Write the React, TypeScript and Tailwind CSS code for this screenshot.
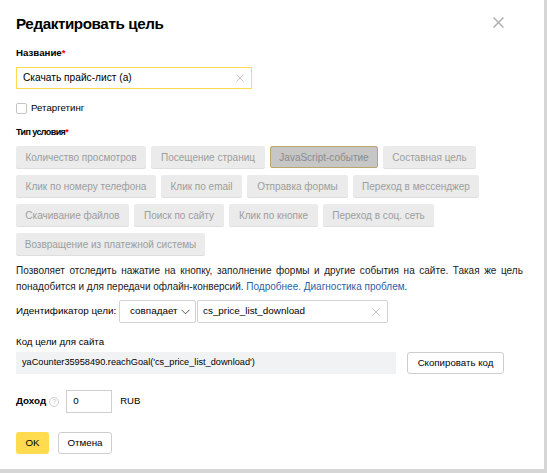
import React from "react";

const ys = { fontFamily: '"Liberation Sans", Arial, sans-serif' };

type Kind = { t: string; w: string };

const rows: Kind[][] = [
  [
    { t: "Количество просмотров", w: "w-[130px]" },
    { t: "Посещение страниц", w: "w-[114px]" },
    { t: "JavaScript-событие", w: "w-[108px]" },
    { t: "Составная цель", w: "w-[93px]" },
  ],
  [
    { t: "Клик по номеру телефона", w: "w-[140px]" },
    { t: "Клик по email", w: "w-[81px]" },
    { t: "Отправка формы", w: "w-[101px]" },
    { t: "Переход в мессенджер", w: "w-[126px]" },
  ],
  [
    { t: "Скачивание файлов", w: "w-[113px]" },
    { t: "Поиск по сайту", w: "w-[90px]" },
    { t: "Клик по кнопке", w: "w-[89px]" },
    { t: "Переход в соц. сеть", w: "w-[111px]" },
  ],
  [{ t: "Возвращение из платежной системы", w: "w-[189px]" }],
];

function Cross({ size = 10, color = "#b3b3b3", w = 1.2 }: { size?: number; color?: string; w?: number }) {
  return (
    <svg width={size} height={size} viewBox="0 0 10 10">
      <path d="M0.5 0.5 L9.5 9.5 M9.5 0.5 L0.5 9.5" stroke={color} strokeWidth={w} fill="none" />
    </svg>
  );
}

export default function App() {
  return (
    <div className="w-[547px] h-[473px] bg-[#d6d6d6] overflow-hidden" style={ys}>
      <div className="w-[544px] h-[469px] bg-white relative px-4 pt-[12px] text-black">
        <button className="absolute left-[493px] top-[17px]">
          <Cross size={11} color="#b0b0b0" w={1.4} />
        </button>

        <h1 className="h-[24px] flex items-center text-[15.2px] font-bold tracking-[-0.4px]">Редактировать цель</h1>

        <div className="mt-[10px] h-[14px] flex items-center text-[9.7px] font-bold">
          Название<span className="text-[#ff0000]">*</span>
        </div>

        <div className="mt-[7px] w-[236px] h-[22px] border border-[#ffdb4d] flex items-center justify-between pl-[6px] pr-[7px]">
          <span className="text-[10.2px]">Скачать прайс-лист (а)</span>
          <Cross size={8} color="#b8b8b8" w={1} />
        </div>

        <label className="mt-[13px] flex items-center gap-[4px] h-[12px]">
          <span className="w-[11px] h-[11px] border border-[#c4c4c4] rounded-[2px] bg-white" />
          <span className="text-[9.7px]">Ретаргетинг</span>
        </label>

        <div className="mt-[13px] h-[12px] flex items-center text-[9px] font-bold tracking-[-0.6px]">
          Тип условия<span className="text-[#ff0000]">*</span>
        </div>

        <div className="mt-[7px] flex flex-col gap-[7px]">
          {rows.map((r, i) => (
            <div key={i} className="flex gap-[5px]">
              {r.map((b) => {
                const sel = b.t === "JavaScript-событие";
                return (
                  <div
                    key={b.t}
                    className={
                      b.w +
                      (sel
                        ? " h-[22px] flex items-center justify-center rounded-[2px] bg-[#c6c6c6] border border-[#bba66c] text-[10px] text-[#8c8c8c] whitespace-nowrap"
                        : " h-[22px] flex items-center justify-center rounded-[2px] bg-[#ebebeb] shadow-[0_1px_0_#dedede] text-[10px] text-[#9d9d9d] whitespace-nowrap")
                    }
                  >
                    {b.t}
                  </div>
                );
              })}
            </div>
          ))}
        </div>

        <p className="mt-[8px] text-[10px] leading-[16px] text-[#1a1a1a] whitespace-nowrap">
          <span className="[word-spacing:1.8px]">
            Позволяет отследить нажатие на кнопку, заполнение формы и другие события на сайте. Такая же цель
          </span>
          <br />
          понадобится и для передачи офлайн-конверсий. <span className="text-[#2b5fa8]">Подробнее.</span>{" "}
          <span className="text-[#2b5fa8]">Диагностика проблем</span>.
        </p>

        <div className="mt-[5px] flex items-center h-[23px]">
          <span className="text-[9.9px] w-[103px]">Идентификатор цели:</span>
          <div className="h-[23px] w-[77px] border border-[#d3d3d3] rounded-[2px] flex items-center pl-[10px] gap-[3px]">
            <span className="text-[9.9px]">совпадает</span>
            <svg width="9" height="6" viewBox="0 0 9 6">
              <path d="M0.5 0.8 L4.5 4.8 L8.5 0.8" stroke="#444" strokeWidth="0.9" fill="none" />
            </svg>
          </div>
          <div className="ml-[1px] h-[23px] w-[191px] border border-[#d3d3d3] rounded-[2px] flex items-center justify-between pl-[5px] pr-[7px]">
            <span className="text-[9.9px]">cs_price_list_download</span>
            <Cross size={8} color="#bdbdbd" w={1} />
          </div>
        </div>

        <div className="mt-[12px] h-[14px] flex items-center text-[9.7px]">Код цели для сайта</div>

        <div className="mt-[3px] flex items-center">
          <div className="w-[380px] h-[22px] bg-[#f1f2f4] flex items-center pl-[6px] text-[9.2px]">
            yaCounter35958490.reachGoal(&#39;cs_price_list_download&#39;)
          </div>
          <div className="ml-[11px] w-[97px] h-[22px] border border-[#cdcdcd] rounded-[3px] flex items-center justify-center text-[9.7px]">
            Скопировать код
          </div>
        </div>

        <div className="mt-[16px] flex items-center h-[23px]">
          <span className="text-[9.8px] font-bold">Доход</span>
          <span className="ml-[3px] w-[10px] h-[10px] rounded-full border border-[#cfcfcf] text-[7px] text-[#c0c0c0] flex items-center justify-center leading-none">
            ?
          </span>
          <div className="ml-[7px] w-[46px] h-[23px] border border-[#cfcfcf] flex items-center pl-[6px] text-[9.8px]">
            0
          </div>
          <span className="ml-[8px] text-[9.6px]">RUB</span>
        </div>

        <div className="mt-[19px] flex items-center gap-[9px]">
          <div className="w-[33px] h-[22px] bg-[#ffdb4d] rounded-[3px] flex items-center justify-center text-[9.8px]">
            OK
          </div>
          <div className="w-[54px] h-[22px] border border-[#cdcdcd] rounded-[3px] flex items-center justify-center text-[9.8px]">
            Отмена
          </div>
        </div>
      </div>
    </div>
  );
}
